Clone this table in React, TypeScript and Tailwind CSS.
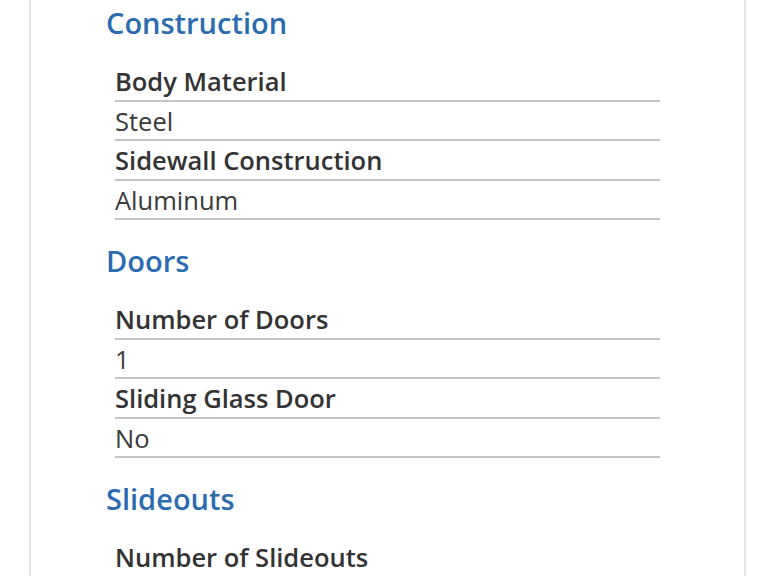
const sections: { title: string; rows: { label: string; value?: string }[] }[] = [
  {
    title: 'Construction',
    rows: [
      { label: 'Body Material', value: 'Steel' },
      { label: 'Sidewall Construction', value: 'Aluminum' },
    ],
  },
  {
    title: 'Doors',
    rows: [
      { label: 'Number of Doors', value: '1' },
      { label: 'Sliding Glass Door', value: 'No' },
    ],
  },
  {
    title: 'Slideouts',
    rows: [{ label: 'Number of Slideouts' }],
  },
];

export default function App() {
  return (
    <div
      className="h-screen overflow-hidden bg-white"
      style={{ fontFamily: '"Open Sans", "Liberation Sans", sans-serif' }}
    >
      <div className="ml-[29px] mr-[22px] min-h-screen border-x-2 border-[#e4e4e4] bg-white">
        <div className="pl-[75px] pr-[84px] pt-[3px]">
          {sections.map((section, i) => (
            <section key={section.title} className={i > 0 ? 'mt-[21px]' : ''}>
              <h2 className="mb-[19px] text-[29px] leading-[40px] font-semibold text-[#2b6cb0]">
                {section.title}
              </h2>
              <dl className="ml-[9px]">
                {section.rows.map((row) => (
                  <div key={row.label}>
                    <dt className="border-b-2 border-[#c4c4c4] pt-[2px] text-[25.5px] leading-[35.5px] font-semibold text-[#333333]">
                      {row.label}
                    </dt>
                    {row.value && (
                      <dd className="border-b-2 border-[#c4c4c4] pt-[2px] text-[25.5px] leading-[35.5px] font-normal text-[#3a3a3a]">
                        {row.value}
                      </dd>
                    )}
                  </div>
                ))}
              </dl>
            </section>
          ))}
        </div>
      </div>
    </div>
  );
}
